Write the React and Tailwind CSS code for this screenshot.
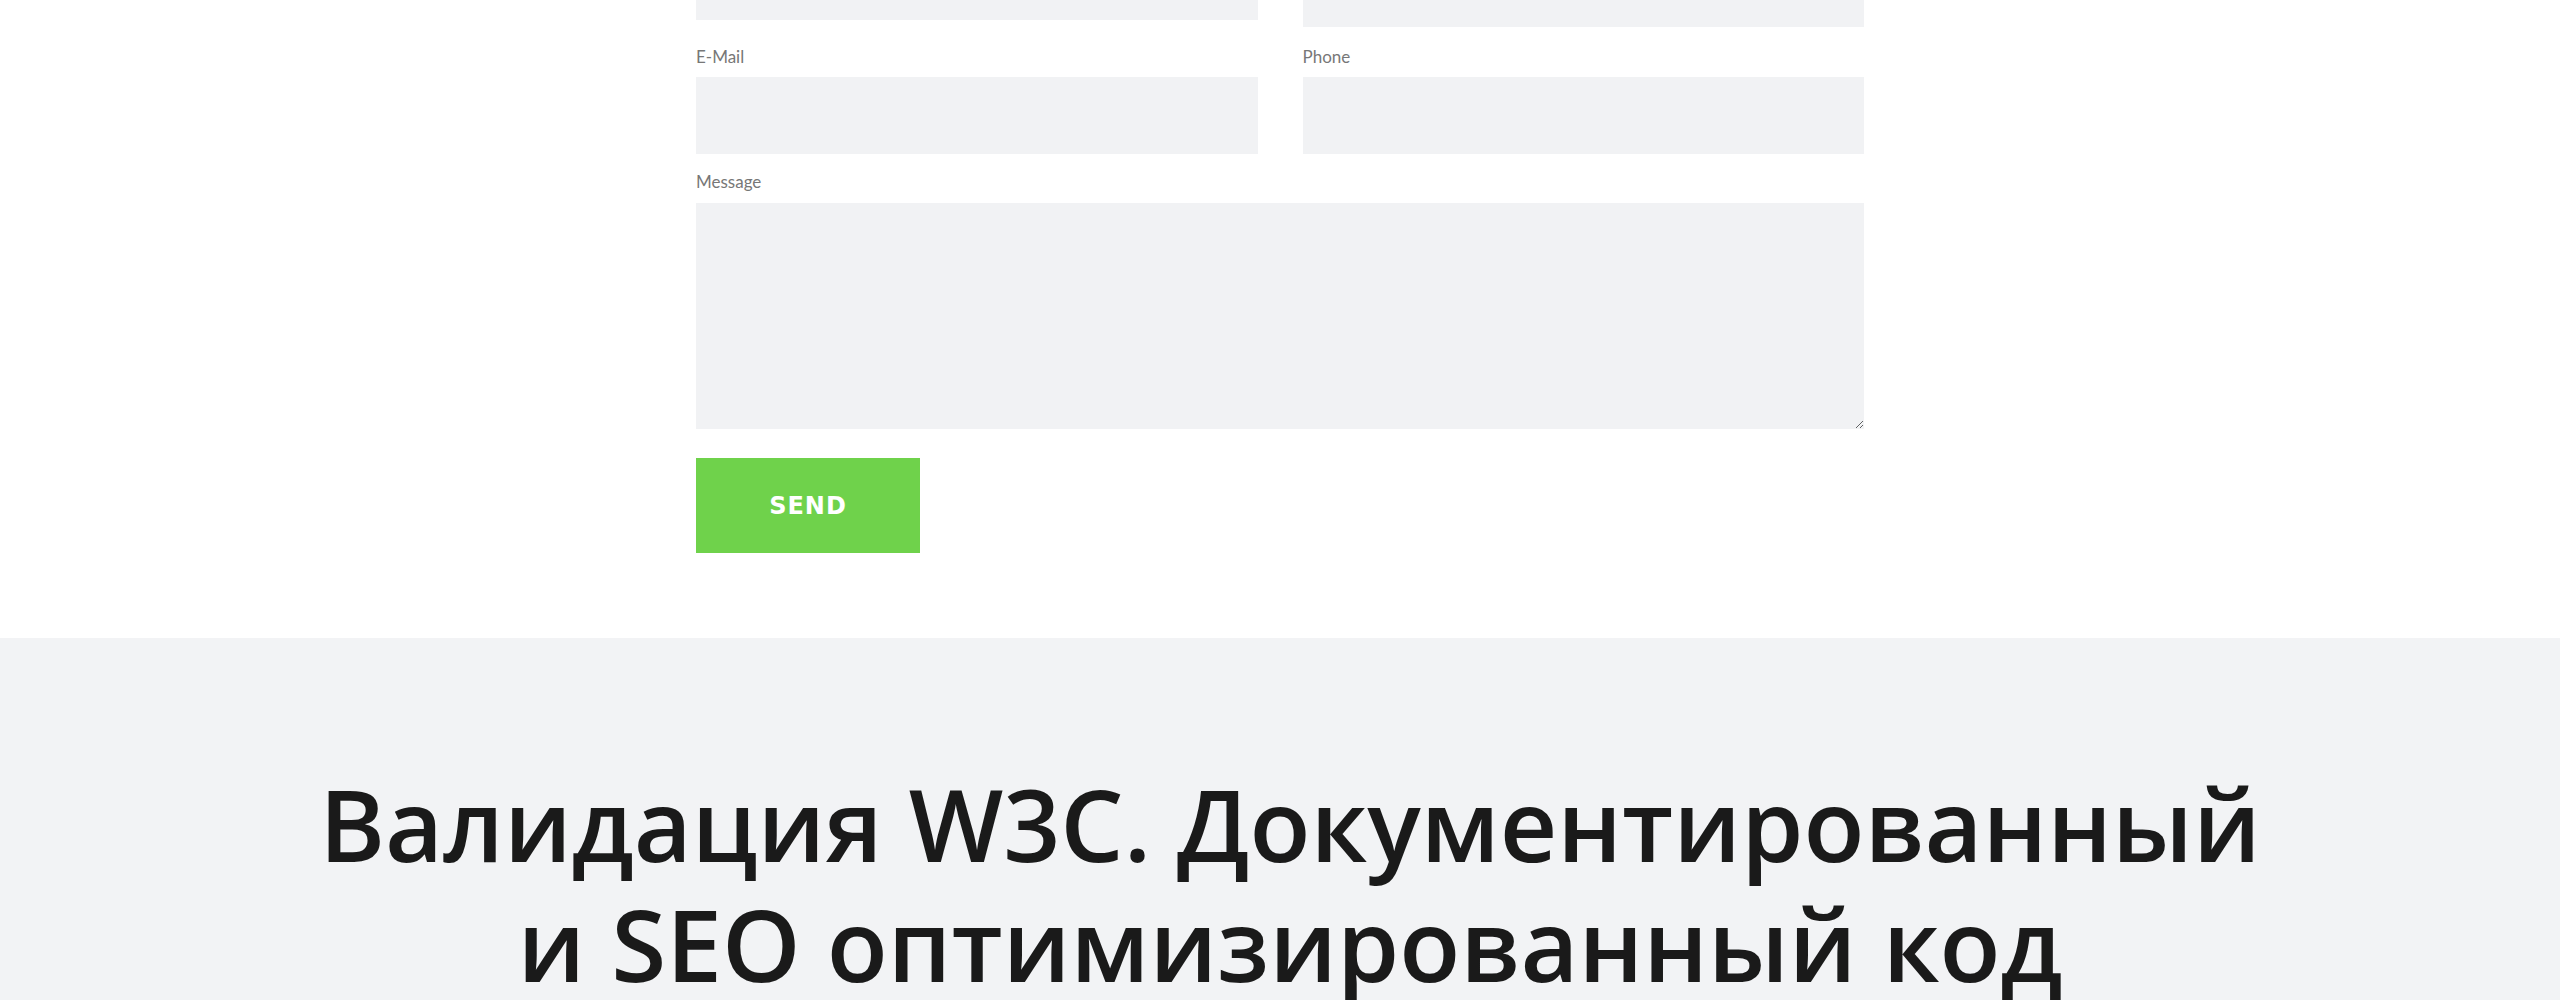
import React from 'react';

const Field = ({ label, className = "" }) => (
  <div className={`flex flex-col ${className}`}>
    <label className="text-[17px] leading-[24px] text-[#777] font-['Lato',sans-serif] pt-[2px] mb-[8px]">{label}</label>
    <input type="text" className="w-full h-[77px] bg-[#f1f2f4] outline-none px-4" />
  </div>
);

const App = () => {
  return (
    <div className="w-full min-h-[1000px] bg-white overflow-hidden">
      <section className="bg-white">
        <form className="w-[1168px] mx-auto pb-[85px]" onSubmit={(e) => e.preventDefault()}>
          <div className="grid grid-cols-2 gap-x-[45px] items-start">
            <div className="h-[20px] bg-[#f1f2f4]" />
            <div className="h-[27px] bg-[#f1f2f4]" />
          </div>

          <div className="grid grid-cols-2 gap-x-[45px] mt-[16px]">
            <Field label="E-Mail" />
            <Field label="Phone" />
          </div>

          <div className="flex flex-col mt-[14px]">
            <label className="text-[17px] leading-[24px] text-[#777] font-['Lato',sans-serif] pt-[2px] mb-[9px]">Message</label>
            <textarea className="w-full h-[226px] bg-[#f1f2f4] outline-none p-4 block" />
          </div>

          <button
            type="submit"
            className="mt-[29px] w-[224px] h-[95px] bg-[#6fd24b] text-white font-['DejaVu_Sans',sans-serif] font-bold text-[24px] tracking-[1px] flex items-center justify-center"
          >
            SEND
          </button>
        </form>
      </section>

      <section className="bg-[#f2f3f5] pt-[125px] pb-[100px] pl-[20px]">
        <h2 className="text-center font-['Open_Sans',sans-serif] font-semibold text-[100px] leading-[120px] text-[#1a1a1a]">
          Валидация W3C. Документированный
          <br />
          и SEO оптимизированный код
        </h2>
      </section>
    </div>
  );
};

export default App;
